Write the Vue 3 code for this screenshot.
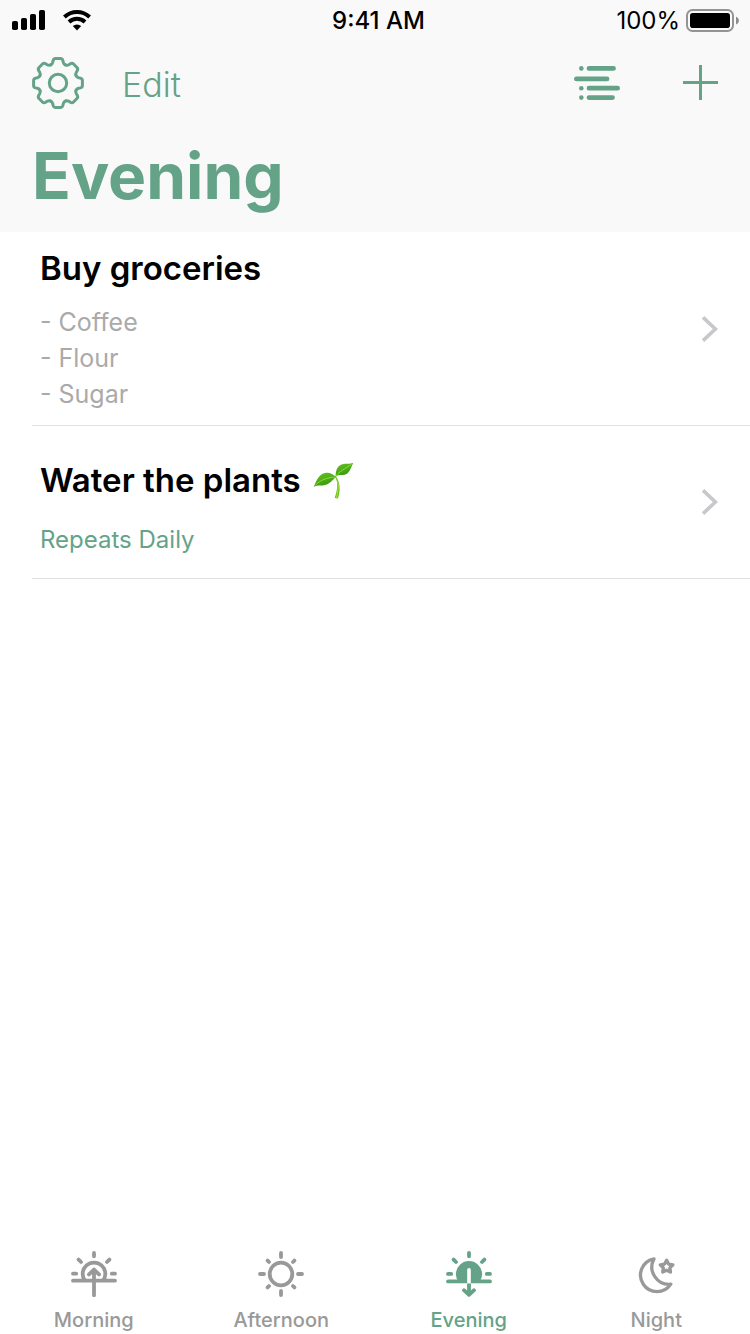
<script setup>
import { ref } from 'vue'

const activeTab = ref('Evening')
const tabs = ['Morning', 'Afternoon', 'Evening', 'Night']
const gearAngles = [0, 45, 90, 135, 180, 225, 270, 315]

const tasks = [
  { title: 'Buy groceries', notes: ['- Coffee', '- Flour', '- Sugar'] },
  { title: 'Water the plants', sprout: true, repeat: 'Repeats Daily' },
]
</script>

<template>
  <div class="screen">
    <header class="header">
      <div class="status">
        <div class="status-left">
          <svg width="34" height="22" viewBox="0 0 34 22" role="img" aria-label="Signal">
            <rect x="0" y="12" width="6" height="9" rx="1.8" />
            <rect x="9" y="9" width="6" height="12" rx="1.8" />
            <rect x="18" y="5" width="6" height="16" rx="1.8" />
            <rect x="27" y="1" width="6" height="20" rx="1.8" />
          </svg>
          <svg width="30" height="22" viewBox="0 0 30 22" role="img" aria-label="Wi-Fi">
            <path d="M2.4 8A18.3 18.3 0 0 1 27.6 8" fill="none" stroke="#000" stroke-width="4" />
            <path d="M7 13A11.6 11.6 0 0 1 23 13" fill="none" stroke="#000" stroke-width="4" />
            <path d="M15 21.4L10.8 17.1A6 6 0 0 1 19.2 17.1Z" />
          </svg>
        </div>
        <span class="time">9:41 AM</span>
        <div class="status-right">
          <span>100%</span>
          <svg width="54" height="24" viewBox="0 0 54 24" role="img" aria-label="Battery full">
            <rect x="2" y="2" width="46" height="21" rx="5.5" fill="none" stroke="#949494" stroke-width="2" />
            <rect x="5" y="5" width="40" height="15" rx="2.8" />
            <path d="M51 8.5Q54 10 54 12.5Q54 15 51 16.5Z" fill="#8c8c8c" />
          </svg>
        </div>
      </div>

      <div class="toolbar">
        <button type="button" class="tool" aria-label="Settings">
          <svg width="52" height="54" viewBox="-26 -26 52 54" class="line-icon gear">
            <circle r="8.7" />
            <path
              v-for="angle in gearAngles"
              :key="angle"
              :transform="`rotate(${angle})`"
              d="M-7.5 -18C-6 -18.6 -5.7 -19 -5.3 -20.6L-4.9 -22.4Q-4.3 -24.4 -2.4 -24.4H2.4Q4.3 -24.4 4.9 -22.4L5.3 -20.6C5.7 -19 6 -18.6 7.5 -18"
            />
          </svg>
        </button>
        <button type="button" class="tool edit">Edit</button>
        <span class="spacer"></span>
        <button type="button" class="tool" aria-label="Show list">
          <svg width="46" height="38" viewBox="0 0 46 38" class="line-icon lines">
            <path d="M15 3.4H39.5M2.4 13.9H33M15 23.2H43.6M15 32.6H38.5" />
            <g class="dots">
              <circle cx="7.3" cy="3.4" r="2.3" />
              <circle cx="7.3" cy="23.2" r="2.3" />
              <circle cx="7.3" cy="32.6" r="2.3" />
            </g>
          </svg>
        </button>
        <button type="button" class="tool add" aria-label="Add task">
          <svg width="36" height="38" viewBox="0 0 36 38">
            <path d="M1 17.5H36M18.5 0V35" fill="none" stroke="currentColor" stroke-width="3" />
          </svg>
        </button>
      </div>

      <h1>Evening</h1>
    </header>

    <main>
      <ul class="tasks">
        <li v-for="task in tasks" :key="task.title">
          <a href="#task" class="task" :class="{ spaced: task.repeat }">
            <div class="task-body">
              <h2>
                {{ task.title }}
                <svg v-if="task.sprout" width="42" height="38" viewBox="0 -1 42 38" role="img" aria-label="Seedling">
                  <defs>
                    <linearGradient id="leaf" x1="0" y1="0" x2="0.4" y2="1">
                      <stop offset="0" stop-color="#66c226" />
                      <stop offset="0.5" stop-color="#50b016" />
                      <stop offset="1" stop-color="#38960c" />
                    </linearGradient>
                  </defs>
                  <path d="M21.6 14.5C25.5 19 24.5 28 21.8 35.6Q23 37.2 25 36.3C27.6 28.5 27.3 20 22.8 14.2Z" fill="#6cc21b" />
                  <path d="M24.7 19C25.8 25 24.8 31 23.4 36" fill="none" stroke="#a8df45" />
                  <path d="M0.7 25C4.5 16.5 6.5 12.3 12 11.1C17 10.1 19.5 12.4 23 14.8C19 19 16 22.6 11 23.2C6 23.8 4 22.8 0.7 25Z" fill="url(#leaf)" />
                  <path d="M2 23.7C7 18 14 15.5 22 15" fill="none" stroke="#8ed943" />
                  <path d="M22.8 14.8C22.4 9 24 4 29.3 2.3C33 1 36.5 2.3 40.3 1C38 5 37 10.8 32.4 12.5C28.5 13.8 26 11.8 22.8 14.8Z" fill="url(#leaf)" />
                  <path d="M23 14C26 9.5 32 7 38.5 2.2" fill="none" stroke="#8ed943" />
                </svg>
              </h2>
              <div v-if="task.notes" class="notes">
                <p v-for="note in task.notes" :key="note">{{ note }}</p>
              </div>
              <p v-if="task.repeat" class="repeat">{{ task.repeat }}</p>
            </div>
            <svg class="chevron" width="18" height="28" viewBox="0 0 18 28" aria-hidden="true">
              <path d="M3 2.4L15.4 14L3 25.6" />
            </svg>
          </a>
        </li>
      </ul>
    </main>

    <nav class="tabs" aria-label="Time of day">
      <button
        v-for="tab in tabs"
        :key="tab"
        type="button"
        class="tab"
        :class="{ active: tab === activeTab }"
        @click="activeTab = tab"
      >
        <svg width="46" height="46" viewBox="0 0 46 46" class="line-icon tab-icon" aria-hidden="true">
          <g v-if="tab === 'Morning'">
            <path d="M23 2V5.3M7.6 8.6L10 11M38.4 8.6L36 11M2 22.7H5.2M40.8 22.7H44M2 29.7H44M13.8 29.4A11.3 11.3 0 1 1 32.2 29.4M23 19V44.2M18 23.4L23 18.6L28 23.4" />
          </g>
          <g v-else-if="tab === 'Afternoon'">
            <circle cx="23" cy="23" r="11.3" />
            <path d="M23 2V6M23 40V44M2 23H6M40 23H44M9.6 9.6L11 11M36.4 9.6L35 11M9.6 36.4L11 35M36.4 36.4L35 35" />
          </g>
          <g v-else-if="tab === 'Evening'">
            <path class="sun" d="M12.5 31A13.1 13.1 0 1 1 33.5 31Z" />
            <path d="M23 2V5.3M7.6 8.6L10 11M38.4 8.6L36 11M2 22.9H5.2M40.8 22.9H44M2 30.4H44M23 30V43.6M18 39.2L23 43.8L28 39.2" />
            <path class="slot" d="M21.2 32.4V18.8A1.8 1.8 0 0 1 24.8 18.8V32.4Z" />
          </g>
          <g v-else class="night">
            <path d="M21 7.9A16.5 16.5 0 1 0 37.8 33.2A17.2 17.2 0 0 1 21 7.9Z" />
            <path transform="translate(33.6 15.8)" d="M0 -6.6L2 -2.75L6.3 -2L3.23 1.05L3.9 5.3L0 3.4L-3.9 5.3L-3.23 1.05L-6.3 -2L-2 -2.75Z" />
          </g>
        </svg>
        <span>{{ tab }}</span>
      </button>
    </nav>
  </div>
</template>

<style>
body {
  margin: 0;
  background: #fff;
}
</style>

<style scoped>
.screen {
  display: flex;
  flex-direction: column;
  min-height: 100vh;
  font-family: Inter, "Liberation Sans", sans-serif;
  color: #000;
}

h1, h2, p, ul {
  margin: 0;
  padding: 0;
}

svg {
  display: block;
  flex: none;
}

button {
  padding: 0;
  border: 0;
  background: none;
  color: inherit;
  font: inherit;
  cursor: pointer;
}

.header {
  background: #f9f9f9;
}

.status {
  display: grid;
  grid-template-columns: 1fr auto 1fr;
  align-items: center;
  height: 40px;
  padding: 0 11px 0 12px;
  font-size: 24px;
}

.status-left, .status-right {
  display: flex;
  align-items: center;
}

.status-left {
  gap: 16px;
}

.status-right {
  justify-content: flex-end;
  gap: 5px;
}

.time {
  padding-left: 6px;
  font-weight: 500;
}

.toolbar {
  display: flex;
  align-items: center;
  height: 88px;
  padding: 0 32px;
  color: #64a388;
}

.edit {
  margin-left: 38px;
  font-size: 34px;
  font-weight: 300;
}

.spacer {
  flex: 1;
}

.add {
  margin-left: 62px;
}

.line-icon {
  fill: none;
  stroke: currentColor;
  stroke-linecap: round;
  stroke-linejoin: round;
}

.gear {
  stroke-width: 3;
}

.lines {
  stroke-width: 4.8;
}

.dots {
  fill: currentColor;
  stroke: none;
}

h1 {
  height: 104px;
  padding: 0 32px;
  color: #64a388;
  font-size: 64px;
  font-weight: 700;
  line-height: 96px;
  box-sizing: border-box;
}

main {
  flex: 1;
}

.tasks {
  list-style: none;
}

.task {
  display: flex;
  align-items: center;
  margin-left: 32px;
  padding: 13px 32px 13px 8px;
  border-bottom: 1px solid #e0e0e0;
  color: inherit;
  text-decoration: none;
}

.task.spaced {
  padding: 20px 32px 20px 8px;
}

.task-body {
  flex: 1;
}

h2 {
  display: flex;
  align-items: center;
  gap: 12px;
  font-size: 33px;
  font-weight: 600;
  line-height: 46px;
}

.spaced h2 {
  padding-top: 11px;
}

.notes {
  padding-top: 13px;
  color: #aaa;
  font-size: 25px;
  line-height: 36px;
}

.repeat {
  padding-top: 19px;
  color: #64a388;
  font-size: 24px;
  line-height: 36px;
}

.chevron {
  fill: none;
  stroke: #c7c7cc;
  stroke-width: 3.6;
}

.tabs {
  display: grid;
  grid-template-columns: repeat(4, 1fr);
}

.tab {
  display: flex;
  flex-direction: column;
  align-items: center;
  gap: 11px;
  padding-bottom: 2px;
  color: #999;
  font-size: 20px;
  font-weight: 500;
  line-height: 24px;
}

.tab.active {
  color: #64a388;
}

.tab-icon {
  stroke-width: 3.8;
}

.sun {
  fill: currentColor;
  stroke: none;
}

.slot {
  fill: #fff;
  stroke: none;
}

.night {
  stroke-width: 3.3;
}
</style>
